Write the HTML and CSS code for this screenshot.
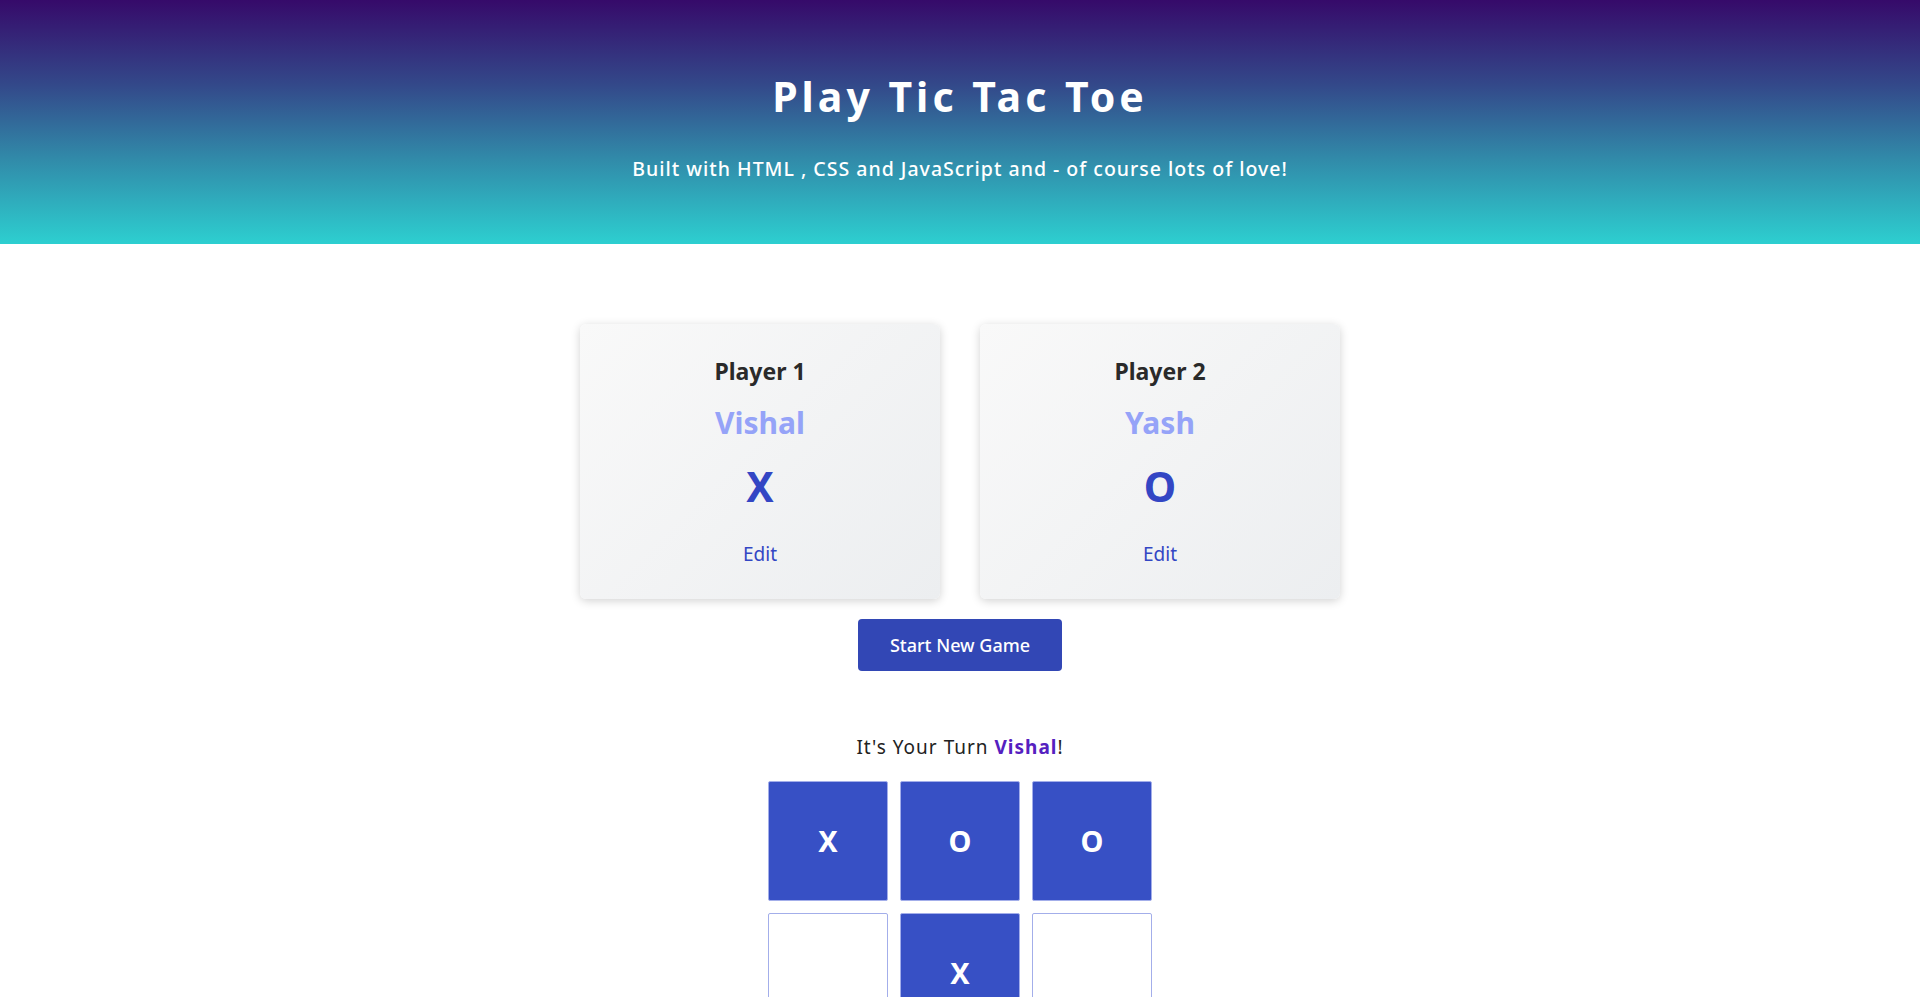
FILE: index.html
```html
<!DOCTYPE html>
<html lang="en">
<head>
<meta charset="utf-8">
<title>Tic Tac Toe</title>
<link rel="stylesheet" href="styles.css">
</head>
<body>
<header class="hero">
  <h1 class="hero-title">Play Tic Tac Toe</h1>
  <p class="hero-sub">Built with HTML , CSS and JavaScript and - of course lots of love!</p>
</header>
<main class="main">
  <section class="players">
    <article class="card">
      <h2 class="card-label">Player 1</h2>
      <h3 class="card-name">Vishal</h3>
      <p class="card-symbol">X</p>
      <button class="card-edit">Edit</button>
    </article>
    <article class="card">
      <h2 class="card-label">Player 2</h2>
      <h3 class="card-name">Yash</h3>
      <p class="card-symbol">O</p>
      <button class="card-edit">Edit</button>
    </article>
  </section>
  <button class="start-btn">Start New Game</button>
  <section class="game">
    <p class="turn">It's Your Turn <span class="turn-name">Vishal</span>!</p>
    <ol class="board">
      <li class="cell filled">X</li>
      <li class="cell filled">O</li>
      <li class="cell filled">O</li>
      <li class="cell"></li>
      <li class="cell filled">X</li>
      <li class="cell"></li>
      <li class="cell"></li>
      <li class="cell"></li>
      <li class="cell"></li>
    </ol>
  </section>
</main>
</body>
</html>
```
FILE: styles.css
```css
* { box-sizing: border-box; }
html, body { margin: 0; padding: 0; }
body {
  font-family: "Noto Sans", "Open Sans", sans-serif;
  color: #222;
  background: #fff;
}
.hero {
  height: 244px;
  background: linear-gradient(to bottom, #360a6a 0%, #33498a 35%, #318aa9 65%, #2dcfd0 100%);
  color: #fff;
  text-align: center;
  padding-top: 72px;
}
.hero-title {
  margin: 0;
  font-size: 41px;
  line-height: 48px;
  font-weight: 700;
  letter-spacing: 4px;
}
.hero-sub {
  margin: 0;
  margin-top: 35px;
  font-size: 19.5px;
  line-height: 28px;
  letter-spacing: 1px;
  font-weight: 500;
}
.main {
  display: flex;
  flex-direction: column;
  align-items: center;
  padding-top: 80px;
}
.players {
  display: flex;
  gap: 40px;
}
.card {
  width: 360px;
  height: 275px;
  border-radius: 6px;
  background: linear-gradient(135deg, #f9f9f9 0%, #eceef0 100%);
  box-shadow: 0 2px 10px rgba(0,0,0,0.18);
  display: flex;
  flex-direction: column;
  align-items: center;
  padding-top: 31px;
}
.card-label {
  margin: 0;
  font-size: 23px;
  line-height: 32px;
  font-weight: 700;
  color: #2a2a2a;
}
.card-name {
  margin: 0;
  margin-top: 17px;
  font-size: 30px;
  line-height: 38px;
  font-weight: 700;
  color: #95a3f8;
}
.card-symbol {
  margin: 0;
  margin-top: 18px;
  font-size: 41px;
  line-height: 52px;
  font-weight: 700;
  color: #3346c4;
}
.card-edit {
  margin-top: 29px;
  border: 0;
  background: none;
  font-family: inherit;
  font-size: 19px;
  line-height: 26px;
  color: #3346c4;
  padding: 0;
  cursor: pointer;
}
.start-btn {
  margin-top: 20px;
  width: 204px;
  height: 52px;
  border: 0;
  border-radius: 4px;
  background: #3247b5;
  color: #fff;
  font-family: inherit;
  font-size: 18px;
  font-weight: 500;
  cursor: pointer;
}
.game {
  display: flex;
  flex-direction: column;
  align-items: center;
  margin-top: 63px;
}
.turn {
  margin: 0;
  font-size: 19px;
  line-height: 26px;
  letter-spacing: 1px;
  color: #222;
}
.turn-name {
  font-weight: 700;
  color: #5520c0;
}
.board {
  list-style: none;
  margin: 0;
  margin-top: 21px;
  padding: 0;
  display: grid;
  grid-template-columns: repeat(3, 120px);
  grid-auto-rows: 120px;
  gap: 12px;
}
.cell {
  border: 1px solid #a3aeea;
  border-radius: 2px;
  background: #fff;
  display: flex;
  align-items: center;
  justify-content: center;
  font-size: 29px;
  font-weight: 700;
  color: #fff;
  padding-bottom: 2px;
}
.cell.filled {
  background: #3750c5;
  border-color: #a3aeea;
}
```
